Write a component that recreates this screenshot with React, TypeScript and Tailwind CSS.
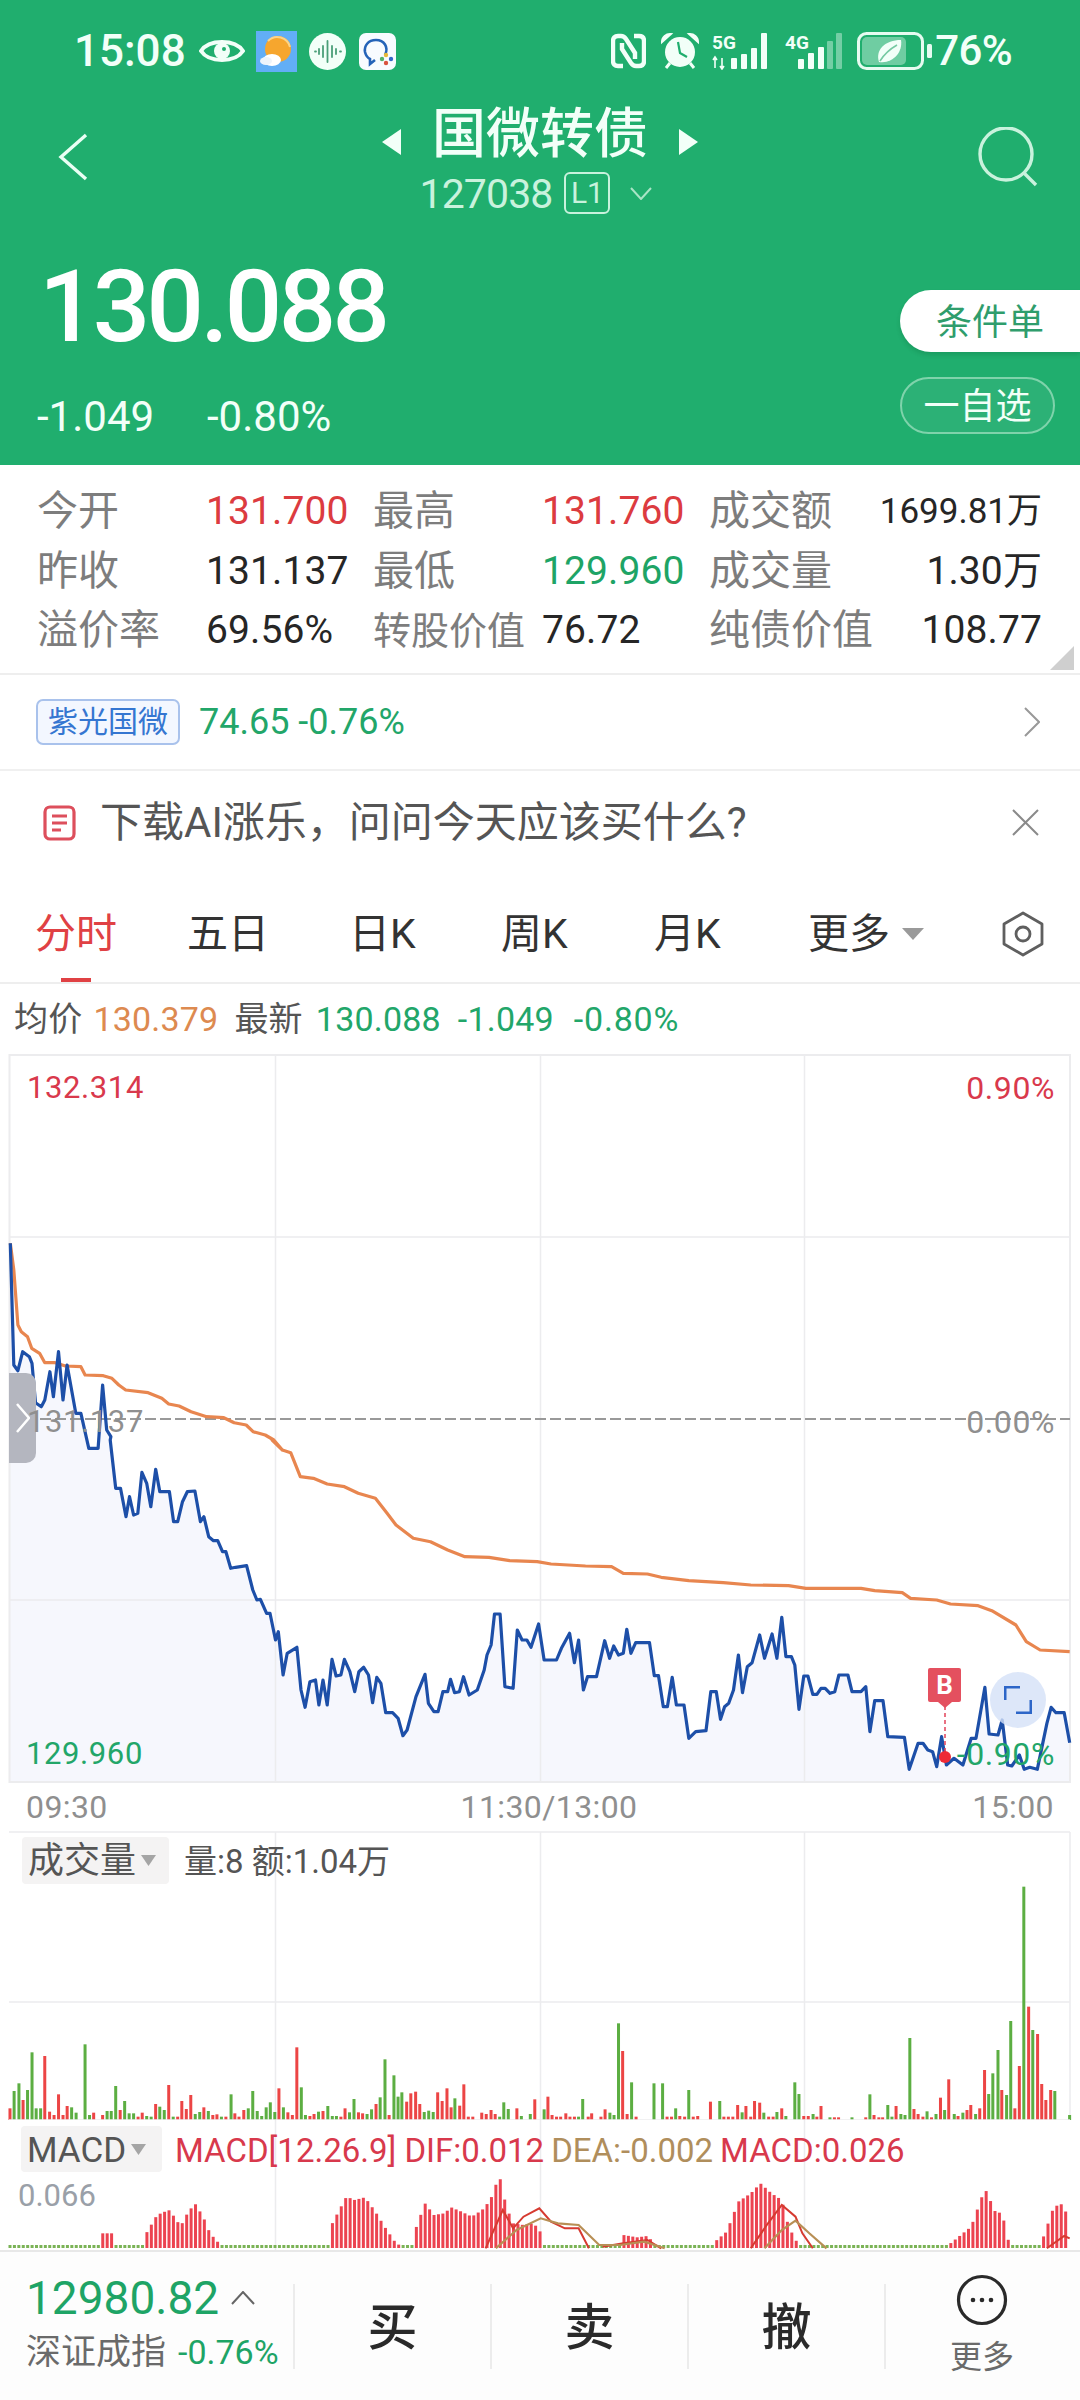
import React from "react";

const SX = 1568 / 1080;
type P = [number, number];
const toPath = (pts: P[]) => pts.map((p, i) => `${i ? "L" : "M"}${p[0].toFixed(1)} ${p[1].toFixed(1)}`).join(" ");
const parsePairs = (s: string): P[] => s.trim().split(/\s+/).map((t) => { const [a, b] = t.split(","); return [Number(a), Number(b)]; });

// Main chart, taken from two crops of the reference
const z3 = (s: string): P[] => parsePairs(s).map(([x, y]) => [x / 2.904, y / 3 + 1050]);
const z5 = (s: string): P[] => parsePairs(s).map(([x, y]) => [x / SX, y / 3 + 1440]);

const blue: P[] = [
  ...z3("30,580 40,945 52,962 66,905 85,920 93,940 103,1058 120,1070 130,1050 145,965 155,1040 170,905 183,1050 195,945 220,1090 235,1090 258,1195 285,1195 298,1005 310,1140 322,1160"),
  ...z5("160,0 168,145 175,145 183,230 188,170 194,225 200,220 206,97 213,130 219,200 226,88 232,155 246,155 252,245 258,245 265,185 272,155 283,153 291,245 296,230 303,290 310,302 316,302 323,335 328,335 335,385 342,382 358,377 367,450 373,480 378,478 387,520 392,520 400,600 404,575 411,705 417,640 431,622 437,750 443,802 450,725 458,720 463,795 469,720 475,795 482,658 488,708 495,705 500,658 508,695 515,755 521,695 528,682 535,705 541,788 547,712 553,730 560,818 570,818 578,835 585,887 591,870 604,770 617,703 622,790 630,815 636,815 643,755 650,755 654,718 660,758 667,755 673,710 681,765 693,750 703,690 707,645 713,615 718,522 726,522 733,740 745,745 751,570 758,600 765,600 771,622 782,552 790,660 808,660 815,625 827,580 834,668 840,600 847,750 853,710 866,710 878,602 885,655 891,618 898,645 905,640 910,568 916,640 923,608 943,608 950,707 956,707 963,800 969,800 976,712 982,795 993,795 1000,895 1010,875 1025,872 1032,755 1040,755 1046,838 1052,800 1058,790 1065,750 1072,645 1078,758 1085,680 1092,668 1103,585 1110,655 1121,582 1128,655 1135,532 1141,650 1149,650 1154,675 1160,808 1167,708 1173,708 1180,763 1186,763 1192,745 1198,745 1205,760 1212,755 1218,705 1231,705 1237,755 1250,755 1257,740 1263,875 1270,782 1282,782 1289,890 1313,892 1320,988 1333,910 1340,910 1347,930 1354,935 1360,980 1367,890 1374,975 1385,955 1398,975 1410,895 1417,895 1430,742 1436,882 1449,885 1455,840 1463,975 1469,978 1480,945 1487,988 1495,982 1506,988 1520,850 1526,802 1533,818 1545,818 1553,908"),
];
const orange: P[] = [
  ...z3("30,580 40,660 52,825 62,845 80,860 92,895 115,910 130,938 160,938 190,948 235,950 247,975 300,977 325,985 345,1005 365,1020 430,1028 470,1045 490,1062 520,1068 555,1085 600,1100 650,1103 680,1118 715,1125 735,1145 770,1155 795,1170 820,1200"),
  ...z5("395,0 410,30 422,38 436,110 455,115 475,132 500,140 520,160 545,175 562,220 575,255 600,295 625,305 650,330 675,350 710,352 740,362 780,365 800,372 850,378 888,380 905,400 940,402 960,412 1000,422 1050,428 1090,435 1145,437 1170,445 1250,445 1270,452 1310,458 1322,475 1360,480 1380,492 1420,497 1440,512 1475,555 1490,605 1510,630 1553,635"),
];

// Volume bars: zoomX,top + colour letter
const volA = "29,925r 41,873g 55,850g 67,900r 80,870g 93,757g 105,925g 118,925g 130,768r 144,935r 157,945r 170,883r 183,945r 195,918r 208,922g 221,938g 247,733g 260,945g 272,938r 298,945r 311,933g 323,933g 336,858g 349,930r 362,903g 375,940g 388,940g 401,950r 413,938r 426,948g 439,950g 452,912r 464,920g 477,930g 490,855r 503,950g 516,950r 528,903r 541,927r 554,885r 567,942g 580,936g 592,922r 605,933g 618,945r 630,943r 643,950g 656,950r 671,883g 682,940r 694,950r 708,930r 721,925g 734,873g 747,933g 760,948g 773,922g 785,907g 798,936g 810,865r 823,922g 836,937r 849,945r 862,742r 875,862g 887,945g 900,948r 912,942r 925,935g 938,933r 952,918g 965,948g 977,948g 990,950r 1002,925r 1015,937g 1028,897g 1041,937r 1053,940r 1066,942g 1079,928g 1092,912r 1104,892g 1118,778g 1130,945r 1144,826g 1156,890g 1167,877g 1181,905r 1193,880r 1207,875r 1219,912r 1232,936g 1245,932g 1258,936g 1271,877r 1284,903r 1298,865r 1310,922r 1321,895g 1335,917r 1347,853r 1360,950r 1373,950r 1399,938r 1412,942r 1426,930r 1438,942r 1451,950g 1463,907g 1476,927g 1501,925r 1514,948g 1540,942g 1553,898r";
const volB = "12,928g 23,890r 35,945r 48,950r 60,950r 75,940r 87,950r 100,950r 112,950g 124,897g 140,950r 150,940r 177,950r 189,928r 203,938g 215,945g 228,670g 240,753r 253,942r 266,847g 279,950r 331,850g 356,850g 369,950r 382,950r 394,925g 406,948r 420,950r 432,870g 445,950r 458,948r 495,905r 522,903g 534,950r 547,950r 560,950r 574,915r 587,937g 598,918r 612,950r 623,903r 638,908r 650,938g 664,950r 677,950r 688,936g 702,925r 714,948g 740,847g 752,882g 766,948r 779,948r 793,942g 804,950r 816,918r 842,952g 855,952r 867,952r 906,952g 946,952r 958,883g 970,945r 984,952r 995,952r 1010,915g 1022,950g 1034,918r 1048,942g 1060,945g 1074,714g 1086,927r 1098,942r 1112,950r 1124,934g 1137,952r 1150,942g 1163,893r 1175,930g 1187,838r 1203,942g 1214,948r 1228,938g 1240,930r 1251,915r 1265,942g 1277,925r 1291,810r 1303,882g 1315,820g 1330,750g 1341,870r 1355,885g 1367,663g 1379,925r 1392,798r 1405,260g 1419,620r 1431,690g 1445,702r 1457,852r 1469,900r 1483,870r 1495,873g 1538,945g";
const parseVol = (s: string, off: number) =>
  s.split(" ").map((t) => {
    const c = t.slice(-1);
    const [x, y] = t.slice(0, -1).split(",").map(Number);
    return { x: off + x / 2.904, y: y / 3 + 1800, c };
  });
const vols = [...parseVol(volA, 0), ...parseVol(volB, 540)];

// MACD envelope groups in crop coordinates
const macdGroups: P[][] = [
  "148,400 163,400",
  "210,408 228,345 245,330 255,355 262,380 272,340 283,310 295,350 305,400 318,430",
  "480,380 490,340 503,290 515,300 530,292 545,335 560,385 575,430 583,438",
  "602,395 617,310 630,345 645,340 655,322 670,335 685,350 700,330 712,300 725,225 735,320 745,370 760,375 775,370 790,410",
  "905,405 925,412 940,408 950,430",
  "1038,425 1055,395 1072,305 1090,280 1104,250 1120,280 1135,300 1145,380 1158,430",
  "1380,430 1410,380 1430,265 1445,335 1455,340 1465,430",
  "1515,410 1530,320 1545,310 1553,400",
].map(parsePairs);
const macdBars = Array.from({ length: 240 }, (_, i) => {
  const zx = (10 + i * 4.417) * SX;
  for (const g of macdGroups) {
    if (zx >= g[0][0] && zx <= g[g.length - 1][0]) {
      for (let k = 0; k < g.length - 1; k++) {
        if (zx >= g[k][0] && zx <= g[k + 1][0]) {
          const t = (zx - g[k][0]) / (g[k + 1][0] - g[k][0] || 1);
          return { x: zx / SX, y: (g[k][1] + t * (g[k + 1][1] - g[k][1])) / 3 + 2100, red: true };
        }
      }
    }
  }
  return { x: zx / SX, y: 2245, red: false };
});
const z7 = (s: string): P[] => parsePairs(s).map(([x, y]) => [x / SX, y / 3 + 2100]);
const difA = z7("705,445 730,330 745,385 760,350 783,325 800,365 820,385 840,385 855,445");
const difB = z7("875,440 905,430 940,420 960,445");
const difC = z7("1090,445 1115,370 1135,315 1155,350 1165,400 1180,445");
const difD = z7("1520,445 1545,408 1553,415");
const deaA = z7("720,445 750,390 785,355 810,370 840,375 870,435 900,435 935,425 965,445");
const deaB = z7("1110,445 1135,390 1155,362 1175,400 1200,445");

const GRID = "#ececee";

function StatusLeft() {
  return (
    <div className="flex items-center">
      <span className="ml-[74px] w-[125px] text-[44px] font-medium leading-none text-[#f2fff8]">15:08</span>
      <svg width="46" height="32" viewBox="0 0 46 32">
        <path d="M2 16C10 4 36 4 44 16C36 28 10 28 2 16Z" fill="none" stroke="#f2fff8" strokeWidth="4" />
        <circle cx="23" cy="16" r="8" fill="#f2fff8" />
        <circle cx="25" cy="14" r="2" fill="#20ae6e" />
      </svg>
      <svg className="ml-[11px]" width="41" height="41" viewBox="0 0 41 41">
        <rect width="41" height="41" fill="#62aef6" />
        <circle cx="22" cy="18" r="13" fill="#f6a62e" />
        <path d="M12 10a13 13 0 0 1 22 6" fill="none" stroke="#fbd48a" strokeWidth="2" />
        <ellipse cx="16" cy="29" rx="9" ry="6" fill="#fff" />
        <ellipse cx="10" cy="30" rx="6" ry="4" fill="#eef4fb" />
      </svg>
      <svg className="ml-[12px]" width="37" height="37" viewBox="0 0 37 37">
        <circle cx="18.5" cy="18.5" r="18.5" fill="#f2fff8" />
        <path d="M6 18.5h1M10 16v5M14 13v11M18.5 8v21M23 13v11M27 16v5M31 18.5h1" stroke="#4a9f78" strokeWidth="1.8" strokeLinecap="round" />
      </svg>
      <svg className="ml-[13px]" width="37" height="37" viewBox="0 0 37 37">
        <rect width="37" height="37" rx="7" fill="#f8fbff" />
        <path d="M26 22C30 14 25 7 17 7C9 7 5 13 6 19C7 23 9 25 11 26L11 31L16 27" fill="none" stroke="#2563b8" strokeWidth="2.6" />
        <circle cx="27" cy="22" r="2.2" fill="#e8b93a" />
        <circle cx="32" cy="26" r="2.2" fill="#3367c8" />
        <circle cx="27" cy="30" r="2.2" fill="#d9533f" />
        <circle cx="23" cy="26" r="2.2" fill="#55b06a" />
      </svg>
    </div>
  );
}

function StatusRight() {
  return (
    <div className="flex items-center">
      <svg width="35" height="36" viewBox="0 0 35 36">
        <path d="M12 33H7Q2 33 2 28V8Q2 3 7 3H10Q13 3 15 6L24 20V26" fill="none" stroke="#f2fff8" strokeWidth="4.4" />
        <path d="M23 3H28Q33 3 33 8V28Q33 33 28 33H25Q22 33 20 30L11 16V10" fill="none" stroke="#f2fff8" strokeWidth="4.4" />
      </svg>
      <svg className="ml-[14px]" width="40" height="38" viewBox="0 0 40 38">
        <circle cx="20" cy="20" r="15" fill="#f2fff8" />
        <path d="M2 10A8 8 0 0 1 11 2L2 10ZM38 10A8 8 0 0 0 29 2L38 10Z" fill="#f2fff8" stroke="#f2fff8" strokeWidth="2" />
        <path d="M6 36L10 31M34 36L30 31" stroke="#f2fff8" strokeWidth="3" />
        <path d="M18 10L20 21L27 25" fill="none" stroke="#20ae6e" strokeWidth="2.2" />
      </svg>
      <svg className="ml-[12px]" width="62" height="38" viewBox="0 0 62 38">
        <text x="0" y="17" fontSize="19" fontWeight="700" fill="#f2fff8" fontFamily="Roboto">5G</text>
        <path d="M3 36V26M1 28L3 25L5 28M10 26V36M8 34L10 37L12 34" stroke="#f2fff8" strokeWidth="1.6" fill="none" />
        <rect x="19" y="26" width="6" height="11" rx="1" fill="#f2fff8" />
        <rect x="29" y="22" width="6" height="15" rx="1" fill="#f2fff8" />
        <rect x="39" y="16" width="6" height="21" rx="1" fill="#f2fff8" />
        <rect x="49" y="1" width="6" height="36" rx="1" fill="#f2fff8" />
      </svg>
      <svg className="ml-[11px]" width="58" height="38" viewBox="0 0 58 38">
        <text x="0" y="17" fontSize="19" fontWeight="700" fill="#f2fff8" fontFamily="Roboto">4G</text>
        <rect x="13" y="27" width="6" height="10" rx="1" fill="#f2fff8" />
        <rect x="23" y="21" width="6" height="16" rx="1" fill="#f2fff8" />
        <rect x="33" y="15" width="6" height="22" rx="1" fill="#f2fff8" />
        <rect x="42" y="9" width="6" height="28" rx="1" fill="#f2fff8" opacity="0.4" />
        <rect x="51" y="1" width="6" height="36" rx="1" fill="#f2fff8" opacity="0.4" />
      </svg>
      <svg className="ml-[14px]" width="76" height="38" viewBox="0 0 76 38">
        <rect x="1.5" y="1.5" width="64" height="35" rx="8" fill="none" stroke="#e6fbf0" strokeWidth="3" />
        <rect x="5" y="5" width="44" height="28" rx="5" fill="#f2fff8" opacity="0.38" />
        <path d="M22 30C18 18 28 8 44 8C46 20 36 32 22 30Z" fill="#f2fff8" />
        <path d="M23 29C28 21 33 17 40 13" stroke="#76c9a2" strokeWidth="1.6" fill="none" />
        <rect x="70" y="12" width="5" height="14" rx="1.5" fill="#e6fbf0" />
      </svg>
      <span className="ml-[2px] mr-[68px] text-[42px] font-medium leading-none tracking-[-0.6px] text-[#f2fff8]">76%</span>
    </div>
  );
}

function Header() {
  return (
    <header className="flex h-[465px] shrink-0 flex-col bg-[#20ae6e]">
      <div className="flex h-[102px] items-center justify-between">
        <StatusLeft />
        <StatusRight />
      </div>
      <div className="relative flex h-[118px] justify-between">
        <svg className="ml-[58px] mt-[31px]" width="30" height="48" viewBox="0 0 30 48">
          <path d="M28 2L3 24L28 46" fill="none" stroke="#e9fff4" strokeWidth="3.4" />
        </svg>
        <div className="ml-[14px] mt-[3px] flex flex-col items-center">
          <div className="flex h-[59px] items-center">
            <svg className="mt-[15px]" width="20" height="26" viewBox="0 0 20 26"><path d="M19 0V26L0 13Z" fill="#f2fff8" /></svg>
            <span className="mx-[30px] text-[54px] font-medium leading-none text-[#f2fff8]">国微转债</span>
            <svg className="mt-[15px]" width="20" height="26" viewBox="0 0 20 26"><path d="M1 0V26L20 13Z" fill="#f2fff8" /></svg>
          </div>
          <div className="ml-[-8px] mt-[8px] flex h-[42px] items-center text-[#c9f2dd]">
            <span className="pt-[2px] text-[41px] leading-none tracking-[-0.9px]">127038</span>
            <span className="ml-[12px] flex h-[42px] w-[46px] items-center justify-center rounded-[6px] border-2 border-[#c9f2dd] text-[30px] leading-none">L1</span>
            <svg className="ml-[20px]" width="22" height="13" viewBox="0 0 22 13"><path d="M1 1L11 12L21 1" fill="none" stroke="#a9e4c6" strokeWidth="2" /></svg>
          </div>
        </div>
        <svg className="mr-[42px] mt-[25px]" width="60" height="60" viewBox="0 0 60 60">
          <circle cx="28" cy="27" r="26" fill="none" stroke="#c9f2dd" strokeWidth="3.4" />
          <path d="M46 46L58 58" stroke="#c9f2dd" strokeWidth="3.4" />
        </svg>
      </div>
      <div className="relative flex flex-1 justify-between">
        <div className="flex flex-col">
          <span className="ml-[39px] mt-[42px] text-[101px] font-medium leading-[90px] tracking-[-3.6px] text-white">130.088</span>
          <div className="ml-[37px] mt-[45px] flex text-[42px] leading-[40px] text-[#f2fff8]">
            <span className="w-[170px]">-1.049</span>
            <span>-0.80%</span>
          </div>
        </div>
        <div className="mt-[70px] flex w-[180px] flex-col items-start">
          <div className="flex h-[62px] w-[180px] items-center rounded-l-[31px] bg-white pl-[36px] pt-[3px] text-[36px] leading-none text-[#2f9d6c] shadow-[0_3px_4px_rgba(0,80,40,0.18)]">条件单</div>
          <div className="mt-[25px] flex h-[57px] w-[155px] items-center justify-center rounded-[29px] border-2 border-[#7fd3ab] bg-[#2cb176] pt-[2px] text-[36px] leading-none text-[#f2fff8]">一自选</div>
        </div>
      </div>
    </header>
  );
}

function Stats() {
  const label = "text-[41px] leading-none text-[#7d7d7d]";
  const val = "text-[39px] leading-none tracking-[0.1px] text-[#262626]";
  const red = "text-[39px] leading-none tracking-[0.1px] text-[#dc3b40]";
  const green = "text-[39px] leading-none tracking-[0.1px] text-[#1ea466]";
  return (
    <section className="relative h-[210px] shrink-0 border-b-2 border-[#eeeeee] pl-[37px] pt-[17px]">
      <div className="grid grid-cols-[169px_167px_169px_167px_1fr] items-center [grid-auto-rows:59.5px] pr-[38px]">
        <span className={label}>今开</span><span className={red}>131.700</span><span className={label}>最高</span><span className={red}>131.760</span>
        <div className="flex items-center justify-between"><span className={label}>成交额</span><span className="text-[35px] leading-none text-[#262626]">1699.81万</span></div>
        <span className={label}>昨收</span><span className={val}>131.137</span><span className={label}>最低</span><span className={green}>129.960</span>
        <div className="flex items-center justify-between"><span className={label}>成交量</span><span className={val}>1.30万</span></div>
        <span className={label}>溢价率</span><span className={val}>69.56%</span><span className="text-[38px] leading-none text-[#7d7d7d]">转股价值</span><span className={val}>76.72</span>
        <div className="flex items-center justify-between"><span className={label}>纯债价值</span><span className={val}>108.77</span></div>
      </div>
      <svg className="absolute right-[6px] top-[181px]" width="24" height="24" viewBox="0 0 24 24"><path d="M24 0V24H0Z" fill="#cfcfcf" /></svg>
    </section>
  );
}

function StockRow() {
  return (
    <section className="flex h-[96px] shrink-0 items-center border-b-2 border-[#f0f0f0] pl-[36px] pr-[40px]">
      <span className="flex h-[46px] w-[144px] items-center justify-center rounded-[7px] border-2 border-[#a9c2ec] bg-[#f3f7ff] text-[30px] leading-none text-[#3576d1]">紫光国微</span>
      <span className="ml-[19px] text-[36px] leading-none text-[#22a669]">74.65 -0.76%</span>
      <svg className="ml-auto" width="16" height="30" viewBox="0 0 16 30"><path d="M1 1L15 15L1 29" fill="none" stroke="#999" strokeWidth="2" /></svg>
    </section>
  );
}

function AdRow() {
  return (
    <section className="flex h-[103px] shrink-0 items-center pl-[43px] pr-[41px]">
      <svg width="33" height="36" viewBox="0 0 33 36">
        <rect x="2" y="2" width="29" height="32" rx="5" fill="none" stroke="#dd4f5c" strokeWidth="3.2" />
        <path d="M9 11H24M9 18H24M9 25H18" stroke="#dd4f5c" strokeWidth="3" />
      </svg>
      <span className="ml-[24px] text-[42px] leading-none text-[#555555]">下载AI涨乐，问问今天应该买什么?</span>
      <svg className="ml-auto" width="27" height="27" viewBox="0 0 27 27"><path d="M1 1L26 26M26 1L1 26" stroke="#8a8a8a" strokeWidth="2" /></svg>
    </section>
  );
}

function Tabs() {
  const tab = "text-[41px] leading-none text-[#333333]";
  return (
    <section className="relative flex h-[110px] shrink-0 items-center border-b-2 border-[#eeeeee] pl-[35px] pt-[12px]">
      <span className="w-[152px] text-[41px] leading-none text-[#e04144]">分时</span>
      <span className={`w-[162px] ${tab}`}>五日</span>
      <span className={`w-[152px] ${tab}`}>日K</span>
      <span className={`w-[153px] ${tab}`}>周K</span>
      <span className={`w-[154px] ${tab}`}>月K</span>
      <span className={tab}>更多</span>
      <svg className="ml-[12px]" width="22" height="12" viewBox="0 0 22 12"><path d="M0 0H22L11 12Z" fill="#9a9a9a" /></svg>
      <svg className="ml-[78px]" width="42" height="46" viewBox="0 0 42 46">
        <path d="M21 2L40 13V33L21 44L2 33V13Z" fill="none" stroke="#5f5f5f" strokeWidth="2.8" strokeLinejoin="round" />
        <circle cx="21" cy="23" r="7" fill="none" stroke="#5f5f5f" strokeWidth="2.8" />
      </svg>
      <div className="absolute bottom-0 left-[61px] h-[4px] w-[30px] bg-[#e04144]" />
    </section>
  );
}

function Legend() {
  return (
    <section className="flex h-[70px] shrink-0 items-center pl-[14px] text-[34px] leading-none tracking-[0.2px]">
      <span className="text-[#555555]">均价</span>
      <span className="ml-[11px] text-[#dd8a50]">130.379</span>
      <span className="ml-[16px] text-[#555555]">最新</span>
      <span className="ml-[13px] text-[#22a669]">130.088</span>
      <span className="ml-[17px] text-[#22a669]">-1.049</span>
      <span className="ml-[20px] text-[#22a669] tracking-[0.8px]">-0.80%</span>
    </section>
  );
}

function PriceChart() {
  const fill = `${toPath(blue)} L${blue[blue.length - 1][0].toFixed(1)} 1781 L10 1781 Z`;
  return (
    <section className="relative h-[729px] shrink-0">
      <svg className="block" width="1080" height="729" viewBox="0 1054 1080 729">
        <path d={fill} fill="#f6f7fd" />
        <path d="M9.5 1055H1070V1782H9.5Z" fill="none" stroke={GRID} strokeWidth="2" />
        <path d="M275.5 1055V1782M540.5 1055V1782M804.5 1055V1782M10 1237H1070M10 1600H1070" stroke={GRID} strokeWidth="1.5" fill="none" />
        <path d="M10 1419H1070" stroke="#999" strokeWidth="2" strokeDasharray="11 4" />
        <path d={toPath(orange)} fill="none" stroke="#e8864f" strokeWidth="3.2" strokeLinejoin="round" />
        <path d={toPath(blue)} fill="none" stroke="#1d4fa8" strokeWidth="3.2" strokeLinejoin="round" />
        <path d="M945 1706V1757" stroke="#e2435a" strokeWidth="1.5" strokeDasharray="4 3" />
        <circle cx="945" cy="1757" r="6" fill="#ee2a36" />
      </svg>
      <div className="absolute left-[9px] top-[319px] flex h-[90px] w-[27px] items-center justify-center rounded-r-[10px] bg-[#b4b6bf]">
        <svg width="14" height="30" viewBox="0 0 14 30"><path d="M1 1L13 15L1 29" fill="none" stroke="#fff" strokeWidth="2.5" /></svg>
      </div>
      <span className="absolute left-[27px] top-[19px] text-[31px] leading-[30px] tracking-[0.6px] text-[#d9394c]">132.314</span>
      <span className="absolute right-[25px] top-[19px] text-[32px] leading-[30px] tracking-[0.6px] text-[#d9394c]">0.90%</span>
      <span className="absolute left-[27px] top-[353px] text-[31px] leading-[30px] tracking-[0.6px] text-[#8f8f8f]">131.137</span>
      <span className="absolute right-[25px] top-[353px] text-[32px] leading-[30px] tracking-[0.6px] text-[#8f8f8f]">0.00%</span>
      <span className="absolute left-[26px] top-[685px] text-[31px] leading-[30px] tracking-[0.6px] text-[#22a669]">129.960</span>
      <span className="absolute right-[25px] top-[685px] text-[32px] leading-[30px] tracking-[0.6px] text-[#22a669]">-0.90%</span>
      <div className="absolute left-[928px] top-[614px] flex h-[34px] w-[33px] items-center justify-center rounded-[2px] bg-[#e4505f] text-[26px] font-bold leading-none text-white">B</div>
      <svg className="absolute left-[938px] top-[648px]" width="14" height="6" viewBox="0 0 14 6"><path d="M0 0H14L7 6Z" fill="#e4505f" /></svg>
      <div className="absolute left-[990px] top-[618px] flex h-[56px] w-[56px] items-center justify-center rounded-full bg-[#d5e1f7]/80">
        <svg width="28" height="28" viewBox="0 0 28 28"><path d="M1 14V1H16M27 14V27H12" fill="none" stroke="#2d66c8" strokeWidth="3" /></svg>
      </div>
    </section>
  );
}

function TimeAxis() {
  return (
    <section className="flex h-[48px] shrink-0 items-center justify-between pl-[26px] pr-[26px] text-[32px] leading-none tracking-[0.4px] text-[#8f8f8f]">
      <span>09:30</span>
      <span className="ml-[18px]">11:30/13:00</span>
      <span>15:00</span>
    </section>
  );
}

function Volume() {
  return (
    <section className="relative h-[289px] shrink-0">
      <svg className="block" width="1080" height="289" viewBox="0 1831 1080 289">
        <path d="M9 1832H1070M275.5 1832V2120M540.5 1832V2120M804.5 1832V2120M1070 1832V2120M9 2002H1070" stroke={GRID} strokeWidth="1.5" fill="none" />
        {vols.map((v, i) => (
          <rect key={i} x={v.x - 1.5} y={v.y} width="3" height={2120 - v.y} fill={v.c === "r" ? "#ec4545" : "#5cae42"} />
        ))}
        <path d="M9 2120H1070" stroke={GRID} strokeWidth="1.5" />
      </svg>
      <div className="absolute left-[22px] top-[6px] flex h-[47px] w-[147px] items-center rounded-[4px] bg-[#f4f3f3] pl-[6px]">
        <span className="text-[36px] leading-none text-[#555555]">成交量</span>
        <svg className="ml-[5px]" width="15" height="11" viewBox="0 0 15 11"><path d="M0 0H15L7.5 11Z" fill="#a5a5a5" /></svg>
      </div>
      <span className="absolute left-[184px] top-[15px] text-[33px] leading-[32px] text-[#555555]">量:8 额:1.04万</span>
    </section>
  );
}

function Macd() {
  return (
    <section className="relative h-[130px] shrink-0">
      <svg className="block" width="1080" height="130" viewBox="0 2120 1080 130">
        <path d="M275.5 2120V2250M540.5 2120V2250M804.5 2120V2250" stroke={GRID} strokeWidth="1.5" fill="none" />
        {macdBars.map((b, i) => (
          <rect key={i} x={b.x - 1.5} y={b.y} width="3" height={2248 - b.y} fill={b.red ? "#ec4350" : "#7bb356"} />
        ))}
        {[difA, difB, difC, difD].map((l, i) => <path key={i} d={toPath(l)} fill="none" stroke="#d63a30" strokeWidth="2" />)}
        {[deaA, deaB].map((l, i) => <path key={i} d={toPath(l)} fill="none" stroke="#b88f55" strokeWidth="2.2" />)}
      </svg>
      <div className="absolute left-[21px] top-[6px] flex h-[46px] w-[141px] items-center rounded-[4px] bg-[#f4f3f3] pl-[6px]">
        <span className="pt-[2px] text-[35px] leading-none text-[#555555]">MACD</span>
        <svg className="ml-[5px]" width="15" height="11" viewBox="0 0 15 11"><path d="M0 0H15L7.5 11Z" fill="#a5a5a5" /></svg>
      </div>
      <div className="absolute left-[175px] top-[15px] flex text-[33px] leading-[32px]">
        <span className="text-[#d8394c]">MACD[12.26.9] DIF:0.012</span>
        <span className="ml-[7px] text-[#b08e5c]">DEA:-0.002</span>
        <span className="ml-[7px] text-[#d8394c]">MACD:0.026</span>
      </div>
      <span className="absolute left-[18px] top-[60px] text-[31px] leading-[32px] text-[#9aa0a8]">0.066</span>
    </section>
  );
}

function BottomBar() {
  const action = "flex h-full w-[195px] items-center justify-center pt-[4px] text-[50px] font-medium leading-none text-[#2a2a2a]";
  const sep = "h-[85px] w-[2px] shrink-0 bg-[#ececec]";
  return (
    <footer className="flex h-[150px] shrink-0 items-center border-t-2 border-[#e8e8e8] bg-[#fdfdfd]">
      <div className="flex w-[293px] flex-col pb-[8px] pl-[26px]">
        <div className="flex items-center">
          <span className="text-[46px] leading-[46px] text-[#1ea466]">12980.82</span>
          <svg className="ml-[12px]" width="24" height="14" viewBox="0 0 24 14"><path d="M1 13L12 1L23 13" fill="none" stroke="#666" strokeWidth="2" /></svg>
        </div>
        <div className="mt-[14px] flex items-center">
          <span className="text-[35px] leading-none text-[#6a6a6a]">深证成指</span>
          <span className="ml-[12px] text-[34px] leading-none text-[#1ea466]">-0.76%</span>
        </div>
      </div>
      <div className={sep} />
      <div className={action}>买</div>
      <div className={sep} />
      <div className={action}>卖</div>
      <div className={sep} />
      <div className={action}>撤</div>
      <div className={sep} />
      <div className="flex flex-1 flex-col items-center pb-[6px] pr-[2px]">
        <svg width="52" height="52" viewBox="0 0 52 52">
          <circle cx="26" cy="26" r="23.5" fill="none" stroke="#2a2a2a" strokeWidth="3.2" />
          <circle cx="17" cy="26" r="2.3" fill="#2a2a2a" />
          <circle cx="26" cy="26" r="2.3" fill="#2a2a2a" />
          <circle cx="35" cy="26" r="2.3" fill="#2a2a2a" />
        </svg>
        <span className="mt-[15px] text-[32px] leading-none text-[#6a6a6a]">更多</span>
      </div>
    </footer>
  );
}

export default function App() {
  return (
    <div className="flex h-[2400px] w-[1080px] flex-col overflow-hidden bg-white font-[Roboto,'Noto_Sans_CJK_SC',sans-serif]">
      <Header />
      <Stats />
      <StockRow />
      <AdRow />
      <Tabs />
      <Legend />
      <PriceChart />
      <TimeAxis />
      <Volume />
      <Macd />
      <BottomBar />
    </div>
  );
}
